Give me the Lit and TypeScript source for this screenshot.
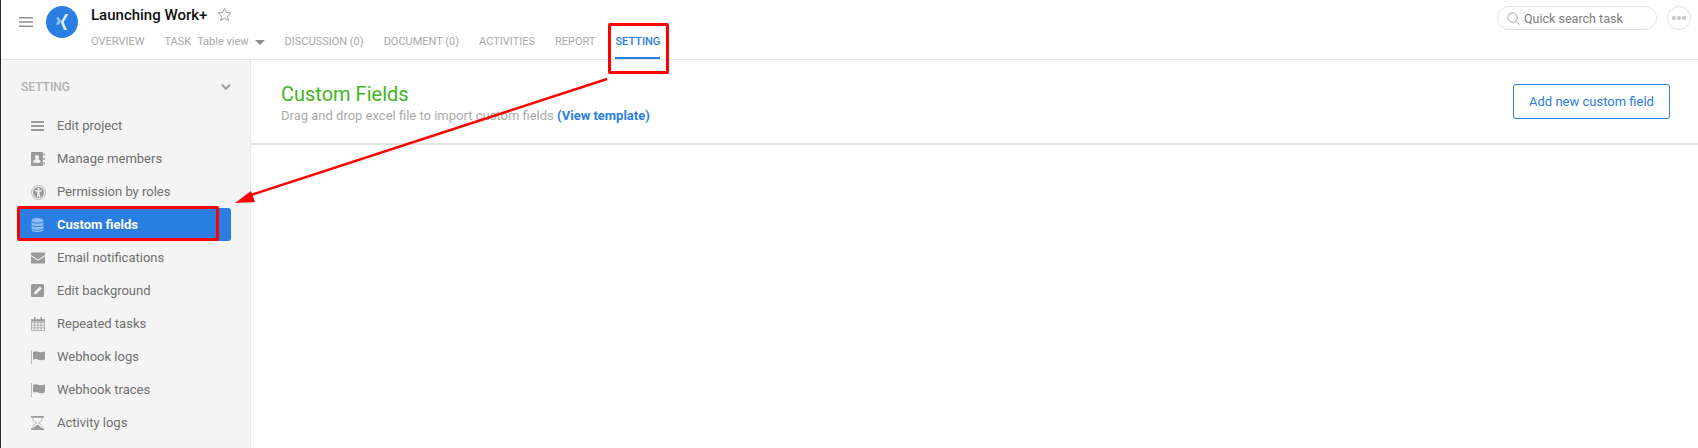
import { LitElement, css, html, svg } from 'lit';
import { customElement } from 'lit/decorators.js';

const ICONS: Record<string, unknown> = {
  lines: svg`<path d="M0 2h13v2H0zM0 6h13v2H0zM0 10h13v2H0z"/>`,
  contact: svg`<path fill-rule="evenodd" d="M1 0h10.500a.5.5 0 0 1 .5.5v13a.5.5 0 0 1-.5.5H1a1 1 0 0 1-1-1V1a1 1 0 0 1 1-1zM6 3a2 2 0 0 0-2 2.200c0 .9.4 1.600 1 2-1.500.3-2.500 1-2.500 2v1.500h7V9.200c0-1-1-1.700-2.500-2 .6-.4 1-1.100 1-2A2 2 0 0 0 6 3z"/><path d="M12.500 1.500H14v2h-1.500zM12.500 6H14v2h-1.500zM12.500 10.500H14v2h-1.500z"/>`,
  access: svg`<circle class="ring" cx="7.500" cy="7.500" r="7"/><path fill-rule="evenodd" d="M7.500 2a5.500 5.500 0 1 1 0 11 5.500 5.500 0 0 1 0-11zm0 1a1 1 0 1 0 0 2 1 1 0 0 0 0-2zM4 5.300v1l2.500.5v1.700L5.700 12.300h1.200l.6-2.500.6 2.500h1.200l-.8-3.800V6.800L11 6.300v-1z"/>`,
  database: svg`<ellipse cx="6.500" cy="2.300" rx="6" ry="2.300"/><path d="M.5 4v2.200c0 1.200 2.700 2 6 2s6-.8 6-2V4c-1 1.100-3.500 1.600-6 1.600S1.500 5.100.5 4zM.5 7.500v2.200c0 1.200 2.700 2 6 2s6-.8 6-2V7.500c-1 1.100-3.500 1.600-6 1.600s-5-.5-6-1.600zM.5 10.900v1c0 1.200 2.700 2 6 2s6-.8 6-2v-1c-1 1.100-3.500 1.600-6 1.600s-5-.5-6-1.600z"/>`,
  mail: svg`<path d="M.5 1.500h13a.5.5 0 0 1 .5.5v2L7 8.500 0 4V2a.5.5 0 0 1 .5-.5zM0 5.300l7 4.500 7-4.500v7.200H0z"/>`,
  edit: svg`<path fill-rule="evenodd" d="M1.500 0h10A1.500 1.500 0 0 1 13 1.500v10a1.500 1.500 0 0 1-1.500 1.500h-10A1.500 1.500 0 0 1 0 11.500v-10A1.500 1.500 0 0 1 1.500 0zm7.300 2.500L3.600 7.700l-.9 2.900 2.900-.9 5.200-5.200z"/>`,
  calendar: svg`<path class="line" d="M.5 2.500h13v11H.5zM.5 5.500h13M.5 8.200h13M.5 10.900h13M3.700 5.500v8M6.900 5.500v8M10.100 5.500v8"/><path d="M3 0h1.500v4H3zM9.500 0H11v4H9.500zM.5 2.500h13v2H.5z"/>`,
  flag: svg`<path class="pole" d="M0 0h1v14H0z"/><path d="M2 2c1.500-1 3-1 5-.3s4 .7 7-.2v8c-3 .9-5 .8-7 .1s-3.500-.7-5 .2z"/>`,
  hourglass: svg`<path d="M0 0h13v1.800H0zM0 12.200h13V14H0zM6.500 8.500c-1 .8-3.300 2-3.500 3.700h7c-.2-1.700-2.500-2.900-3.500-3.700z"/><path class="line" d="M2 1.800v1.700c0 1.600 2.500 2.700 3.600 3.500C4.500 7.800 2 8.900 2 10.500v1.700M11 1.800v1.700c0 1.600-2.500 2.700-3.600 3.500 1.100.8 3.600 1.900 3.600 3.500v1.700"/>`,
};

const MENU = [
  { label: 'Edit project', icon: 'lines' },
  { label: 'Manage members', icon: 'contact' },
  { label: 'Permission by roles', icon: 'access' },
  { label: 'Custom fields', icon: 'database', active: true },
  { label: 'Email notifications', icon: 'mail' },
  { label: 'Edit background', icon: 'edit' },
  { label: 'Repeated tasks', icon: 'calendar' },
  { label: 'Webhook logs', icon: 'flag' },
  { label: 'Webhook traces', icon: 'flag' },
  { label: 'Activity logs', icon: 'hourglass' },
];

const TABS = ['DISCUSSION (0)', 'DOCUMENT (0)', 'ACTIVITIES', 'REPORT'];

@customElement('app-root')
export class AppRoot extends LitElement {
  static override styles = css`
    :host {
      display: block;
      position: relative;
      width: 1698px;
      height: 448px;
      overflow: hidden;
      background: #fff;
      font-family: Roboto, 'Liberation Sans', sans-serif;
      border-left: 1px solid #1f2a36;
      box-sizing: border-box;
    }

    .header {
      display: flex;
      height: 60px;
      box-sizing: border-box;
      border-bottom: 1px solid #e3e3e3;
      padding-right: 7px;
    }

    .burger {
      width: 14px;
      height: 14px;
      margin: 15px 0 0 18px;
      fill: #8f8f8f;
      flex: none;
    }

    .logo {
      width: 32px;
      height: 32px;
      border-radius: 50%;
      background: #2a7de1;
      margin: 6px 0 0 13px;
      flex: none;
      display: flex;
      align-items: center;
      justify-content: center;
    }

    .title-area {
      margin-left: 13px;
      flex: none;
    }

    .title-row {
      display: flex;
      align-items: center;
      height: 28px;
      padding-top: 1px;
      box-sizing: border-box;
    }

    .title {
      font-size: 15px;
      font-weight: 500;
      color: #111;
    }

    .star {
      width: 15px;
      height: 15px;
      margin-left: 10px;
      fill: none;
      stroke: #9a9a9a;
      stroke-width: 1;
    }

    .tabs {
      display: flex;
      height: 31px;
      font-size: 11px;
      color: #a9a9a9;
      font-weight: 400;
    }

    .tab {
      height: 31px;
      margin-right: 20px;
      padding-top: 7px;
      box-sizing: border-box;
      line-height: 13px;
      white-space: nowrap;
    }

    .tab.task {
      display: flex;
      align-items: flex-start;
    }

    .tab.task span {
      margin-left: 6px;
    }

    .caret {
      width: 0;
      height: 0;
      margin: 5px 0 0 6px;
      border: 5px solid transparent;
      border-top-color: #8c8c8c;
      border-bottom: 0;
    }

    .tab.active {
      color: #2a7de1;
      font-weight: 500;
      border-bottom: 2px solid #2a7de1;
    }

    .search {
      margin-left: auto;
      margin-top: 6px;
      width: 160px;
      height: 24px;
      box-sizing: border-box;
      border: 1px solid #e3e3e3;
      border-radius: 12px;
      display: flex;
      align-items: center;
      padding-left: 9px;
      font-size: 12.500px;
      color: #7d7d7d;
      flex: none;
    }

    .search svg {
      width: 13px;
      height: 13px;
      margin-right: 4px;
      fill: none;
      stroke: #999;
    }

    .more {
      width: 24px;
      height: 24px;
      margin: 6px 0 0 10px;
      box-sizing: border-box;
      border: 1px solid #e0e0e0;
      border-radius: 50%;
      display: flex;
      align-items: center;
      justify-content: center;
      gap: 1px;
      flex: none;
    }

    .more i {
      width: 4px;
      height: 4px;
      border-radius: 50%;
      background: #c4c4c4;
    }

    .body {
      display: flex;
      height: 388px;
    }

    .sidebar {
      width: 250px;
      flex: none;
      background: #f4f4f4;
      border-right: 1px solid #e8e8e8;
      box-sizing: border-box;
      padding: 0 19px 0 0;
    }

    .side-head {
      display: flex;
      justify-content: space-between;
      align-items: center;
      height: 50px;
      padding: 3px 0 0 20px;
      box-sizing: border-box;
      font-size: 12px;
      font-weight: 500;
      color: #b0b0b0;
    }

    .side-head svg {
      width: 10px;
      height: 6px;
      fill: none;
      stroke: #9d9d9d;
      stroke-width: 2;
    }

    .items {
      display: flex;
      flex-direction: column;
      margin-top: -1px;
    }

    .item {
      display: flex;
      align-items: center;
      height: 33px;
      margin-left: 19px;
      padding-left: 11px;
      font-size: 13px;
      color: #6f6f6f;
      border-radius: 0 3px 3px 0;
    }

    .item svg {
      width: 14px;
      height: 14px;
      fill: #9a9a9a;
      margin-right: 12px;
      flex: none;
      overflow: visible;
    }

    .item svg .line {
      fill: none;
      stroke: #a3a3a3;
      stroke-width: 0.8;
    }

    .item svg .ring {
      fill: none;
      stroke: #b5b5b5;
      stroke-width: 1;
    }

    .item svg .pole {
      fill: #b8b8b8;
    }

    .item.active {
      background: #2a7de1;
      color: #fff;
      font-weight: 700;
    }

    .item.active svg {
      fill: #8fbdf2;
    }

    .content {
      flex: 1;
    }

    .page-head {
      display: flex;
      justify-content: space-between;
      height: 85px;
      box-sizing: border-box;
      border-bottom: 2px solid #e3e3e3;
      padding: 22px 28px 0 30px;
    }

    h1 {
      margin: 0 0 2px;
      font-size: 20px;
      font-weight: 400;
      line-height: 24px;
      color: #43b51e;
    }

    .hint {
      font-size: 13px;
      line-height: 15px;
      color: #aaa;
    }

    .hint b {
      color: #2a7de1;
      font-weight: 700;
    }

    .add {
      all: unset;
      box-sizing: border-box;
      width: 157px;
      height: 35px;
      margin-top: 2px;
      text-align: center;
      font-size: 13px;
      color: #2a7de1;
      border: 1px solid #2a7de1;
      border-radius: 3px;
    }

    .overlay {
      position: absolute;
      left: -1px;
      top: 0;
      width: 1698px;
      height: 448px;
      pointer-events: none;
    }

    .overlay svg {
      position: absolute;
      left: 0;
      top: 0;
    }

    .mark {
      position: absolute;
      box-sizing: border-box;
      border: 3px solid #f00;
      border-radius: 2px;
    }

    .mark.tab-mark {
      left: 608px;
      top: 23px;
      width: 61px;
      height: 51px;
    }

    .mark.row-mark {
      left: 17px;
      top: 206px;
      width: 202px;
      height: 35px;
    }
  `;

  override render() {
    return html`
      <div class="header">
        <svg class="burger" viewBox="0 0 14 14"><path d="M0 2h14v1.600H0zM0 6.200h14v1.600H0zM0 10.400h14V12H0z"/></svg>
        <div class="logo">
          <svg width="14" height="16" viewBox="0 0 14 16">
            <path fill="#9cc4f3" d="M1 3.500h3l2 3.200-2.200 4H.8L3 6.800z"/>
            <path fill="#dbe9fb" d="M10.500 0h3L8.700 8l3.300 8H9L5.700 8z"/>
          </svg>
        </div>
        <div class="title-area">
          <div class="title-row">
            <span class="title">Launching Work+</span>
            <svg class="star" viewBox="0 0 16 16"><path d="M8 1.500l2 4.400 4.800.5-3.600 3.200 1 4.700L8 11.900l-4.200 2.400 1-4.700L1.200 6.400 6 5.900z"/></svg>
          </div>
          <div class="tabs">
            <div class="tab">OVERVIEW</div>
            <div class="tab task">TASK<span>Table view</span><i class="caret"></i></div>
            ${TABS.map((t) => html`<div class="tab">${t}</div>`)}
            <div class="tab active">SETTING</div>
          </div>
        </div>
        <div class="search">
          <svg viewBox="0 0 14 14"><circle cx="6" cy="6" r="5"/><path d="M10 10l3.500 3.500"/></svg>
          Quick search task
        </div>
        <div class="more"><i></i><i></i><i></i></div>
      </div>
      <div class="body">
        <div class="sidebar">
          <div class="side-head">
            SETTING
            <svg viewBox="0 0 10 6"><path d="M1 .8l4 4 4-4"/></svg>
          </div>
          <div class="items">
            ${MENU.map(
              (m) => html`
                <div class="item ${m.active ? 'active' : ''}">
                  <svg viewBox="0 0 14 14">${ICONS[m.icon]}</svg>
                  ${m.label}
                </div>
              `,
            )}
          </div>
        </div>
        <div class="content">
          <div class="page-head">
            <div>
              <h1>Custom Fields</h1>
              <div class="hint">Drag and drop excel file to import custom fields <b>(View template)</b></div>
            </div>
            <button class="add">Add new custom field</button>
          </div>
        </div>
      </div>
      <div class="overlay">
        <div class="mark tab-mark"></div>
        <div class="mark row-mark"></div>
        <svg width="1698" height="448" viewBox="0 0 1698 448">
          <path d="M607 79 248 196" stroke="#f00" stroke-width="2.500" fill="none"/>
          <path d="M235 203 251 191 255 202z" fill="#f00"/>
        </svg>
      </div>
    `;
  }
}
